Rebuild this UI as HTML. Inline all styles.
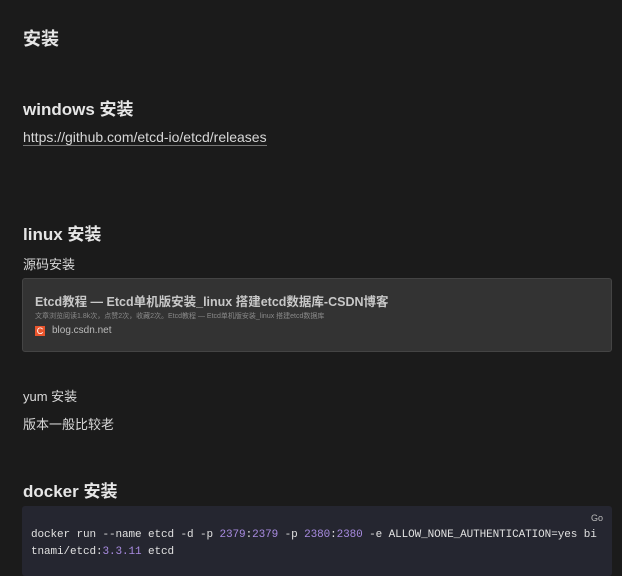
<!DOCTYPE html>
<html><head><meta charset="utf-8"><style>
body{margin:0;width:622px;height:571px;background:#1b1b1b;overflow:hidden;font-family:"Liberation Sans","Noto Sans CJK SC",sans-serif;color:#dcdcdc;position:relative}
.a{position:absolute;left:23px;white-space:nowrap}
h1,h2{margin:0;font-weight:bold;color:#e6e6e6}
.t{font-size:13px;color:#d8d8d8}
.card{position:absolute;left:22px;top:278px;width:588px;height:72px;background:#333333;border:1px solid #444;border-radius:3px}
.code{position:absolute;left:22px;top:506px;width:590px;height:70px;background:#252630;border-radius:3px}
pre{margin:0;position:absolute;left:9px;top:21px;font-family:"Liberation Mono",monospace;font-size:11px;letter-spacing:-0.1px;line-height:17px;color:#e0e0e0}
.n{color:#a88be0}
</style></head><body>
<h1 class="a" style="top:25px;font-size:18px">安装</h1>
<h2 class="a" style="top:95px;font-size:17px">windows 安装</h2>
<div class="a t" style="top:129px;font-size:14px;border-bottom:1px solid #777;line-height:16px">https://github.com/etcd-io/etcd/releases</div>
<h2 class="a" style="top:220px;font-size:17px">linux 安装</h2>
<div class="a t" style="top:254px">源码安装</div>
<div class="card">
<div style="position:absolute;left:12px;top:12px;font-size:12.5px;font-weight:bold;color:#c8c8c8">Etcd教程 — Etcd单机版安装_linux 搭建etcd数据库-CSDN博客</div>
<div style="position:absolute;left:12px;top:32px;font-size:7px;color:#8a8a8a">文章浏览阅读1.8k次，点赞2次，收藏2次。Etcd教程 — Etcd单机版安装_linux 搭建etcd数据库</div>
<div style="position:absolute;left:12px;top:47px;width:10px;height:10px;background:#e9552d;color:#fff;font-size:9px;line-height:10px;text-align:center">C</div>
<div style="position:absolute;left:29px;top:46px;font-size:10px;color:#bbb">blog.csdn.net</div>
</div>
<div class="a t" style="top:386px">yum 安装</div>
<div class="a t" style="top:414px">版本一般比较老</div>
<h2 class="a" style="top:477px;font-size:17px">docker 安装</h2>
<div class="code">
<div style="position:absolute;right:9px;top:7px;font-size:9px;color:#bbb">Go</div>
<pre>docker run --name etcd -d -p <span class="n">2379</span>:<span class="n">2379</span> -p <span class="n">2380</span>:<span class="n">2380</span> -e ALLOW_NONE_AUTHENTICATION=yes bi
tnami/etcd:<span class="n">3.3.11</span> etcd</pre>
</div>
</body></html>
